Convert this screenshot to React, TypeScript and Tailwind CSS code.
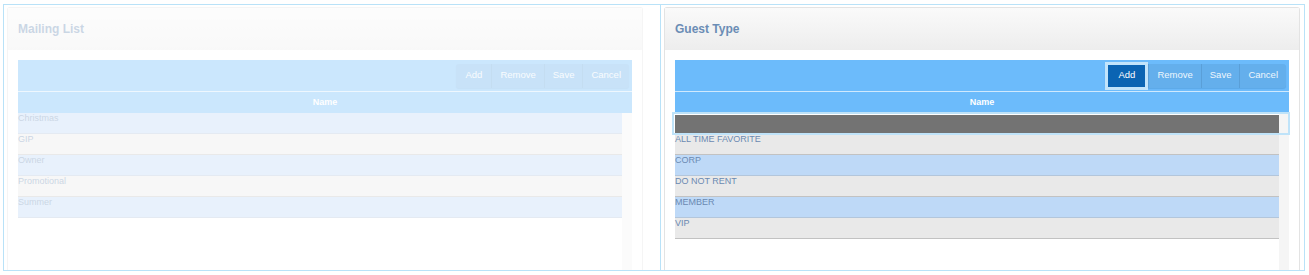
import React from "react";

type Row = { name: string };

const mailing: Row[] = [
  { name: "Christmas" },
  { name: "GIP" },
  { name: "Owner" },
  { name: "Promotional" },
  { name: "Summer" },
];

const guest: Row[] = [
  { name: "ALL TIME FAVORITE" },
  { name: "CORP" },
  { name: "DO NOT RENT" },
  { name: "MEMBER" },
  { name: "VIP" },
];

function Toolbar({ addActive }: { addActive: boolean }) {
  const labels = ["Add", "Remove", "Save", "Cancel"];
  return (
    <div className="h-[32px] bg-[#6cbbfb] border-b border-[#cfe9fd] flex items-center justify-end pr-[3px]">
      <div className="flex h-[24px] rounded-[3px] bg-[#64afec] shadow-[0_1px_1px_rgba(0,60,120,0.15)]">
        {labels.map((l, i) => {
          const active = addActive && i === 0;
          return (
            <div
              key={l}
              className={
                active
                  ? "relative z-10 flex items-center px-[10px] my-[1px] ml-[3px] mr-[3px] bg-[#0b64b3] text-white text-[9.5px] shadow-[0_0_0_3px_#c2e4fb]"
                  : i === 0
                  ? "flex items-center px-[9px] text-[#eef6fd] text-[9.5px]"
                  : "flex items-center px-[8px] text-[#eef6fd] text-[9.5px] border-l border-[#5a9fd8]"
              }
            >
              {l}
            </div>
          );
        })}
      </div>
    </div>
  );
}

function Card({
  title,
  rows,
  withNewRow,
}: {
  title: string;
  rows: Row[];
  withNewRow: boolean;
}) {
  const offset = withNewRow ? 1 : 0;
  return (
    <div className="w-[636px] h-full border border-b-0 border-[#e3e3e3] rounded-t-[3px] flex flex-col bg-white">
      <div className="h-[42px] bg-gradient-to-b from-[#fafafa] to-[#ededed] flex items-center px-[10px]">
        <span className="text-[12px] font-bold text-[#6b8db5]">{title}</span>
      </div>
      <div className="flex-1 flex flex-col pt-[10px] pl-[10px] pr-[10px]">
        <div className="w-[614px] flex flex-col flex-1">
          <Toolbar addActive={withNewRow} />
          <div className="h-[21px] bg-[#6cbbfb] flex items-center justify-center text-[9px] font-bold text-white">
            Name
          </div>
          <div className="flex flex-1">
            <div className="w-[604px] flex flex-col">
              {withNewRow && (
                <div className="relative h-[21px] pt-[2px]">
                  <div className="h-[18px] bg-[#737373]" />
                  <div className="absolute -left-[3px] -top-[1px] w-[618px] h-[23px] border-2 border-[#bfe3f9]" />
                </div>
              )}
              {rows.map((r, i) => {
                const idx = i + offset;
                const blue = idx % 2 === 0;
                return (
                  <div
                    key={r.name}
                    className={
                      blue
                        ? "h-[21px] bg-[#bed9f7] border-b border-[#b3c6db] text-[9px] leading-[11px] text-[#6b8ab2]"
                        : "h-[21px] bg-[#e9e9e9] border-b border-[#c2c2c2] text-[9px] leading-[11px] text-[#6b8ab2]"
                    }
                  >
                    {r.name}
                  </div>
                );
              })}
            </div>
            <div className="w-[10px] bg-[#f5f5f5]" />
          </div>
        </div>
      </div>
    </div>
  );
}

export default function App() {
  return (
    <div className="pl-[3px] pt-[4px] font-['Liberation_Sans',Arial,sans-serif] bg-white">
      <div className="w-[1302px] h-[267px] border border-[#b9e2f8] flex overflow-hidden">
        <div className="w-[656px] pl-[3px] pt-[2px] h-full">
          <div className="opacity-35 h-full">
            <Card title="Mailing List" rows={mailing} withNewRow={false} />
          </div>
        </div>
        <div className="flex-1 border-l border-[#b9e2f8] pl-[3px] pt-[2px] h-full">
          <Card title="Guest Type" rows={guest} withNewRow={true} />
        </div>
      </div>
    </div>
  );
}
